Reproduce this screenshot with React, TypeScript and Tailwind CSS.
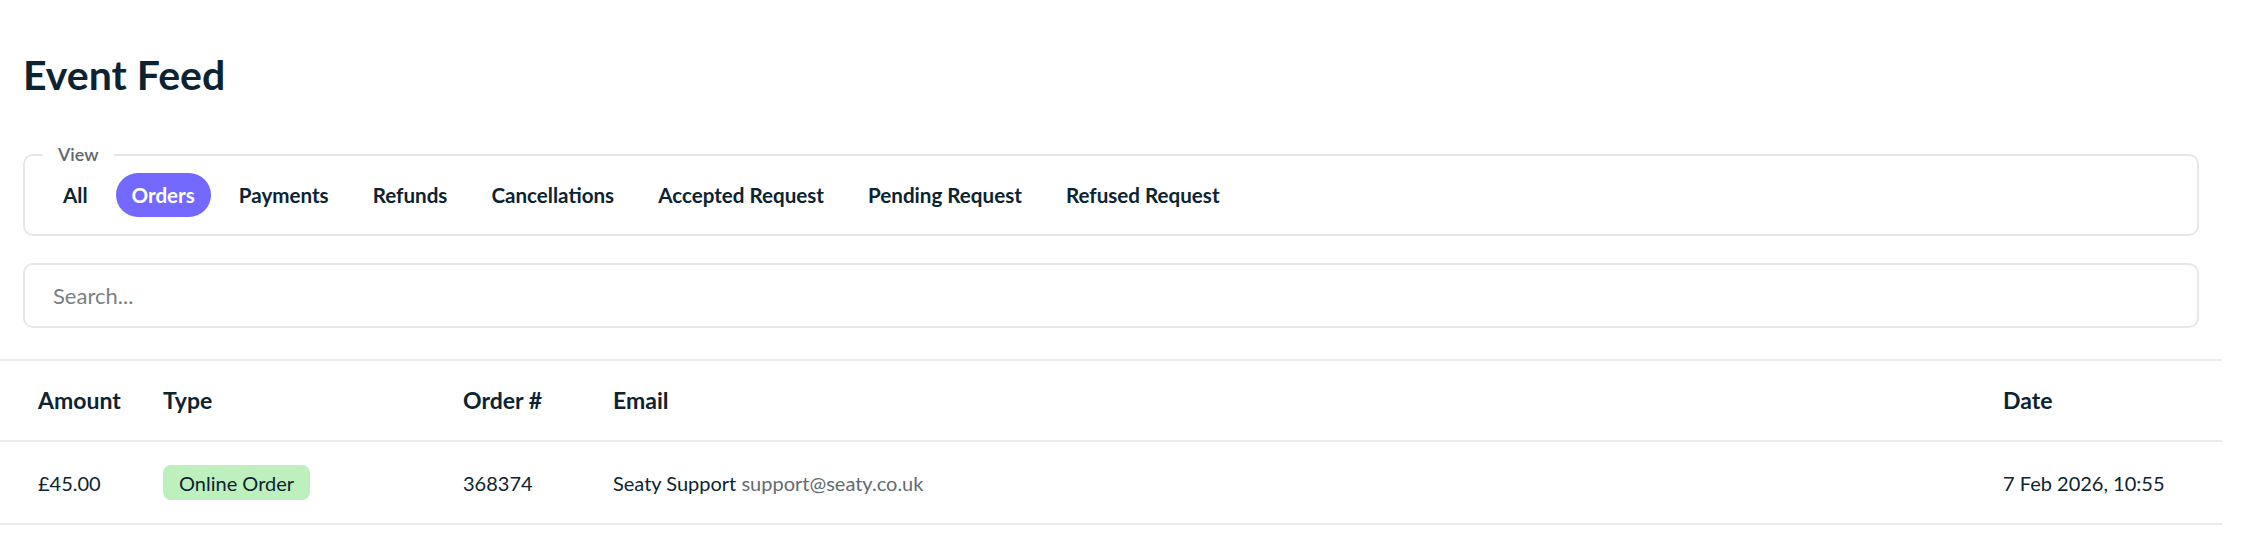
import React from "react";

const tabs = [
  "All",
  "Orders",
  "Payments",
  "Refunds",
  "Cancellations",
  "Accepted Request",
  "Pending Request",
  "Refused Request",
];

export default function App() {
  return (
    <div className="w-[2222px] bg-white text-[#0c2431] font-['Lato',sans-serif]">
      <div className="px-[23px] pt-[54px]">
        <h1 className="text-[41px] leading-none font-bold">Event Feed</h1>

        <div className="relative mt-[59px] rounded-[10px] border-2 border-[#e7e7e7] px-[22px] py-[17px]">
          <span className="absolute left-[18px] top-[-11px] bg-white px-[15px] text-[18px] leading-none font-semibold text-[#62676b]">
            View
          </span>
          <div className="flex items-center gap-[12px]">
            {tabs.map((t) => (
              <button
                key={t}
                className={
                  t === "Orders"
                    ? "h-[44px] rounded-full bg-[#7369ff] px-4 text-[20.6px] font-bold text-white"
                    : "h-[44px] rounded-full px-4 text-[20.6px] font-bold text-[#0c2431]"
                }
              >
                {t}
              </button>
            ))}
          </div>
        </div>

        <div className="mt-[27px] flex h-[65px] items-center rounded-[10px] border-2 border-[#e7e7e7] pl-[28px]">
          <input
            placeholder="Search..."
            className="w-full bg-transparent text-[22px] text-[#0c2431] outline-none placeholder:text-[#7a7f83]"
          />
        </div>
      </div>

      <div className="mt-[31px] border-t-2 border-[#ebebeb]">
        <div className="grid h-[81px] grid-cols-[163px_300px_150px_1390px_1fr] items-center border-b-2 border-[#ebebeb] text-[23px] font-bold">
          <div className="pl-[38px]">Amount</div>
          <div>Type</div>
          <div>Order #</div>
          <div>Email</div>
          <div>Date</div>
        </div>
        <div className="grid h-[83px] grid-cols-[163px_300px_150px_1390px_1fr] items-center border-b-2 border-[#ebebeb] text-[20px]">
          <div className="pl-[38px]">£45.00</div>
          <div>
            <span className="inline-flex h-[35px] items-center rounded-[8px] bg-[#bdf0bd] px-[16px]">
              Online Order
            </span>
          </div>
          <div>368374</div>
          <div>
            Seaty Support <span className="text-[#5f6b72]">support@seaty.co.uk</span>
          </div>
          <div>7 Feb 2026, 10:55</div>
        </div>
      </div>
    </div>
  );
}
